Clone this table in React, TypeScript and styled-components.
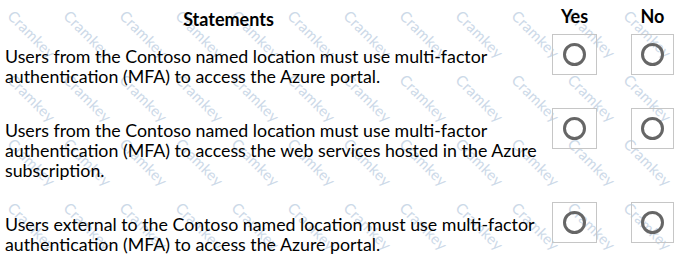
import React from "react";
import styled, { createGlobalStyle } from "styled-components";

const GlobalStyle = createGlobalStyle`
  html, body {
    margin: 0;
    padding: 0;
    background: #ffffff;
  }
  body {
    font-family: Lato, "Liberation Sans", sans-serif;
    color: #111111;
  }
`;

const statements: string[][] = [
  [
    "Users from the Contoso named location must use multi-factor",
    "authentication (MFA) to access the Azure portal.",
  ],
  [
    "Users from the Contoso named location must use multi-factor",
    "authentication (MFA) to access the web services hosted in the Azure",
    "subscription.",
  ],
  [
    "Users external to the Contoso named location must use multi-factor",
    "authentication (MFA) to access the Azure portal.",
  ],
];

// watermark cells that sit fully inside the page
const marks = Array.from({ length: 48 });

export default function App() {
  return (
    <>
      <GlobalStyle />
      <Page>
        <Watermark aria-hidden>
          {marks.map((_, i) => (
            <MarkCell key={i}>
              <Mark>Cramkey</Mark>
            </MarkCell>
          ))}
        </Watermark>
        <Table>
          <HeaderRow>
            <StatementsHead>Statements</StatementsHead>
            <ColHead $width={45}>Yes</ColHead>
            <ColHead $width={43}>No</ColHead>
          </HeaderRow>
          <Body>
            {statements.map((lines, i) => (
              <Row key={i}>
                <Statement>
                  {lines.map((line) => (
                    <Line key={line}>{line}</Line>
                  ))}
                </Statement>
                <ChoiceBox $width={45}>
                  <Radio />
                </ChoiceBox>
                <ChoiceBox $width={43}>
                  <Radio />
                </ChoiceBox>
              </Row>
            ))}
          </Body>
        </Table>
      </Page>
    </>
  );
}

const Page = styled.div`
  position: relative;
  width: 681px;
  height: 259px;
  overflow: hidden;
  background: #ffffff;
`;

const Watermark = styled.div`
  position: absolute;
  inset: 0;
  display: grid;
  grid-template-columns: repeat(12, 56px);
  grid-auto-rows: 64px;
  padding: 2px 4px;
  pointer-events: none;
`;

const MarkCell = styled.div`
  display: flex;
  align-items: center;
  justify-content: center;
`;

const Mark = styled.span`
  transform: rotate(45deg);
  font-size: 15px;
  letter-spacing: 0.3px;
  color: #ccd9e8;
  white-space: nowrap;
`;

const Table = styled.div`
  position: relative;
  padding: 6px 7px 0 5px;
`;

const HeaderRow = styled.div`
  display: grid;
  grid-template-columns: minmax(0, 1fr) 79px 43px;
  align-items: start;
  margin-bottom: 5px;
  font-size: 18px;
  line-height: 20px;
  font-weight: 700;
  color: #000000;
`;

const StatementsHead = styled.div`
  padding: 3px 100px 0 0;
  text-align: center;
`;

const ColHead = styled.div<{ $width: number }>`
  width: ${(p) => p.$width}px;
  text-align: center;
`;

const Body = styled.div`
  display: flex;
  flex-direction: column;
  gap: 22px;
`;

const Row = styled.div`
  display: grid;
  grid-template-columns: minmax(0, 1fr) 79px 43px;
  align-items: start;
`;

const Statement = styled.div`
  padding-top: 12px;
  font-size: 17.8px;
  line-height: 20px;
  color: #000000;
`;

const Line = styled.div`
  white-space: nowrap;
`;

const ChoiceBox = styled.div<{ $width: number }>`
  box-sizing: border-box;
  width: ${(p) => p.$width}px;
  height: 41px;
  border: 1px solid #c6c6c6;
  display: flex;
  align-items: center;
  justify-content: center;
`;

const Radio = styled.span`
  box-sizing: border-box;
  width: 23px;
  height: 23px;
  border: 3px solid #666666;
  border-radius: 50%;
`;
